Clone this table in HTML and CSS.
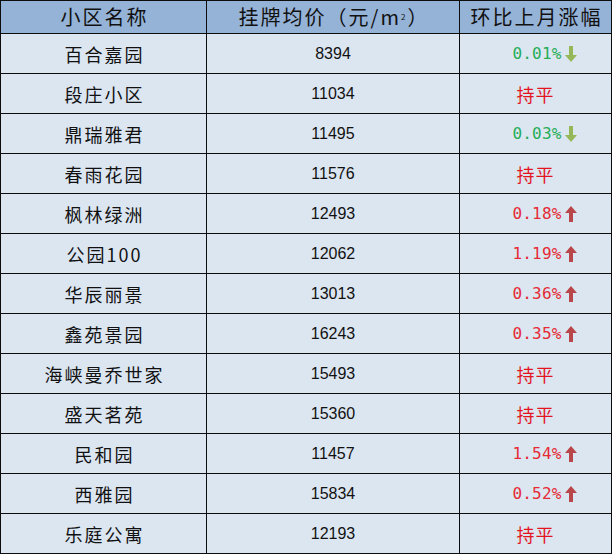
FILE: index.html
```html
<!DOCTYPE html>
<html lang="zh-CN">
<head>
<meta charset="utf-8">
<title>小区挂牌均价</title>
<link rel="stylesheet" href="styles.css">
</head>
<body>
<div class="sheet">
  <div class="cell head name">小区名称</div>
  <div class="cell head">挂牌均价（元/m<sup class="sq">2</sup>）</div>
  <div class="cell head">环比上月涨幅</div>

  <div class="cell name">百合嘉园</div><div class="cell num">8394</div>
  <div class="cell chg"><span class="pct down">0.01%<svg class="arrow" viewBox="0 0 12 16"><path d="M4 0H8V9H12L6 16L0 9H4Z"/></svg></span></div>

  <div class="cell name">段庄小区</div><div class="cell num">11034</div>
  <div class="cell chg"><span class="flat">持平</span></div>

  <div class="cell name">鼎瑞雅君</div><div class="cell num">11495</div>
  <div class="cell chg"><span class="pct down">0.03%<svg class="arrow" viewBox="0 0 12 16"><path d="M4 0H8V9H12L6 16L0 9H4Z"/></svg></span></div>

  <div class="cell name">春雨花园</div><div class="cell num">11576</div>
  <div class="cell chg"><span class="flat">持平</span></div>

  <div class="cell name">枫林绿洲</div><div class="cell num">12493</div>
  <div class="cell chg"><span class="pct up">0.18%<svg class="arrow" viewBox="0 0 12 16"><path d="M6 0L12 7H8V16H4V7H0Z"/></svg></span></div>

  <div class="cell name">公园100</div><div class="cell num">12062</div>
  <div class="cell chg"><span class="pct up">1.19%<svg class="arrow" viewBox="0 0 12 16"><path d="M6 0L12 7H8V16H4V7H0Z"/></svg></span></div>

  <div class="cell name">华辰丽景</div><div class="cell num">13013</div>
  <div class="cell chg"><span class="pct up">0.36%<svg class="arrow" viewBox="0 0 12 16"><path d="M6 0L12 7H8V16H4V7H0Z"/></svg></span></div>

  <div class="cell name">鑫苑景园</div><div class="cell num">16243</div>
  <div class="cell chg"><span class="pct up">0.35%<svg class="arrow" viewBox="0 0 12 16"><path d="M6 0L12 7H8V16H4V7H0Z"/></svg></span></div>

  <div class="cell name">海峡曼乔世家</div><div class="cell num">15493</div>
  <div class="cell chg"><span class="flat">持平</span></div>

  <div class="cell name">盛天茗苑</div><div class="cell num">15360</div>
  <div class="cell chg"><span class="flat">持平</span></div>

  <div class="cell name">民和园</div><div class="cell num">11457</div>
  <div class="cell chg"><span class="pct up">1.54%<svg class="arrow" viewBox="0 0 12 16"><path d="M6 0L12 7H8V16H4V7H0Z"/></svg></span></div>

  <div class="cell name">西雅园</div><div class="cell num">15834</div>
  <div class="cell chg"><span class="pct up">0.52%<svg class="arrow" viewBox="0 0 12 16"><path d="M6 0L12 7H8V16H4V7H0Z"/></svg></span></div>

  <div class="cell name">乐庭公寓</div><div class="cell num">12193</div>
  <div class="cell chg"><span class="flat">持平</span></div>
</div>
</body>
</html>
```

FILE: styles.css
```css
html, body {
  margin: 0;
  padding: 0;
  background: #ffffff;
}

.sheet {
  display: grid;
  grid-template-columns: 205px 252px 151px;
  grid-template-rows: 32px repeat(13, 39px);
  gap: 1px;
  padding: 1px;
  width: 612px;
  height: 554px;
  box-sizing: border-box;
  background: #0d0d0d;
  font-family: "Noto Sans CJK SC", "Liberation Sans", sans-serif;
  color: #111111;
}

.cell {
  display: flex;
  align-items: center;
  justify-content: center;
  background: #dce6f1;
  font-size: 18px;
  line-height: 1;
  white-space: nowrap;
}

.head {
  background: #95b3d7;
  font-size: 20px;
  letter-spacing: 2px;
  padding-left: 2px;
}

.name {
  letter-spacing: 2px;
  padding-left: 2px;
}

.sq {
  font-size: 8px;
  vertical-align: 9px;
  letter-spacing: 0;
  margin-right: 2px;
}

.num {
  font-family: "Liberation Sans", sans-serif;
  font-size: 16px;
}

.chg {
  font-size: 18px;
}

.flat {
  color: #e3141f;
  letter-spacing: 1px;
}

.pct {
  position: relative;
  font-family: "DejaVu Sans Mono", "Liberation Mono", monospace;
  font-size: 16px;
  letter-spacing: 0.2px;
  padding-left: 3px;
}

.pct.down {
  color: #26ad57;
}

.pct.up {
  color: #e52a35;
}

.arrow {
  position: absolute;
  left: calc(100% + 3px);
  top: 50%;
  width: 12px;
  height: 16px;
  margin-top: -8px;
  filter: blur(0.4px);
}

.down .arrow {
  fill: #94b858;
}

.up .arrow {
  fill: #b8464a;
}
```
